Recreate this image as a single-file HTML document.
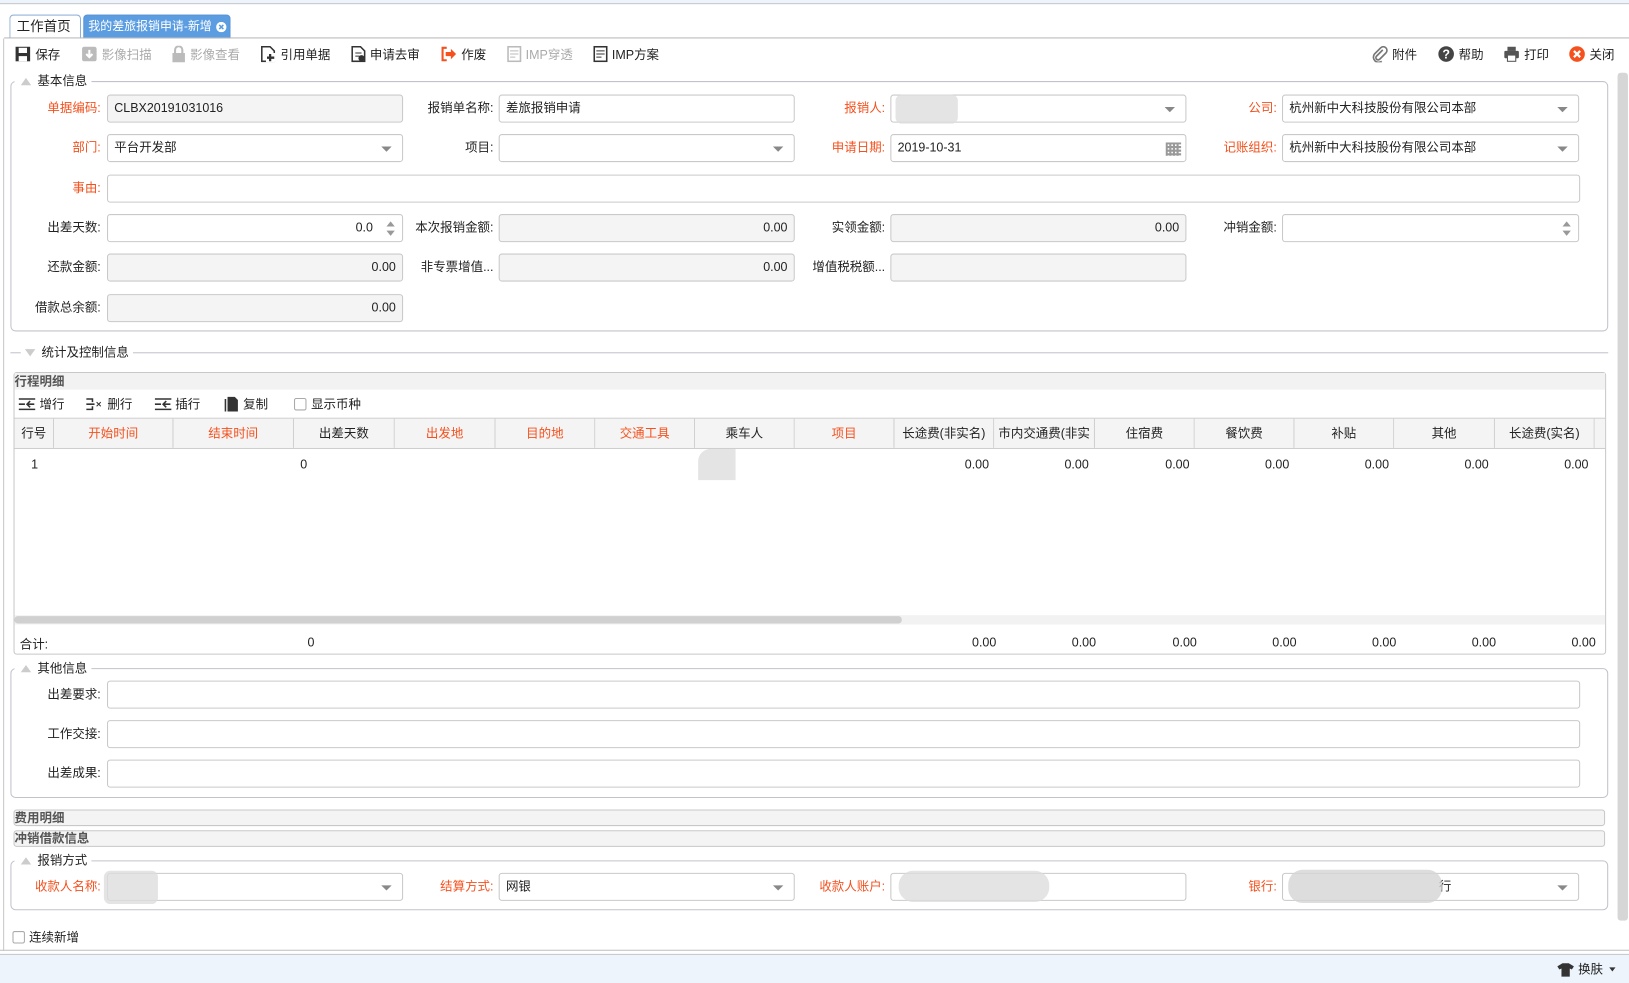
<!DOCTYPE html>
<html><head><meta charset="utf-8">
<style>
*{box-sizing:border-box;margin:0;padding:0}
html,body{width:1629px;height:983px;overflow:hidden;background:#fff}
#w{position:absolute;left:0;top:0;width:1568px;height:946px;transform:scale(1.0389,1.0391);transform-origin:0 0;font-family:"Liberation Sans","Noto Sans CJK SC",sans-serif;font-size:12px;color:#222}
.a{position:absolute}
.lb{position:absolute;text-align:right;width:95px;line-height:27px;white-space:nowrap;font-size:12px}
.r{color:#f4511e}
.in{position:absolute;height:27px;border:1px solid #c9c9c9;border-radius:3px;background:#fff;line-height:25px;padding:0 6px;font-size:12px;white-space:nowrap;overflow:hidden}
.ro{background:#f4f4f4}
.num{text-align:right}
.dd::after{content:"";position:absolute;right:10px;top:11px;border-left:5px solid transparent;border-right:5px solid transparent;border-top:5px solid #888}
.fs{position:absolute;border:1px solid #c2c2cc;border-radius:5px}
.lg{position:absolute;background:#fff;padding:0 4px 0 0;font-size:12px;line-height:14px}
.lg i{display:inline-block;width:0;height:0;border-left:5px solid transparent;border-right:5px solid transparent;border-bottom:7px solid #ccc;margin:0 6px 1px 6px;vertical-align:middle}
.tb{position:absolute;top:44px;font-size:12px;line-height:16px;white-space:nowrap}
.ic{display:inline-block;vertical-align:-3px;margin-right:4px}
.g{color:#aaa}
.th{position:absolute;top:403px;height:28px;line-height:28px;text-align:center;border-right:1px solid #d0d0d0;background:#f4f4f4;font-size:12px;white-space:nowrap;overflow:hidden}
.cell{position:absolute;font-size:12px;text-align:right}
.bar{position:absolute;left:13px;width:1532px;height:16px;border:1px solid #c8c8c8;border-radius:3px;background:#f4f4f4;font-weight:bold;color:#555;line-height:14px;font-size:12px;padding-left:0}
.blur{position:absolute;background:#ddd;border-radius:6px;opacity:.8}
</style></head><body><div id="w">
<div class="a" style="left:0;top:0;width:1568px;height:4px;background:#edf4fc;border-bottom:1px solid #c8c8c8"></div>
<div class="a" style="left:9px;top:14px;width:69px;height:23px;border:1px solid #8fb0d8;border-bottom:none;border-radius:4px 4px 0 0;background:#fff;line-height:22px;padding-left:6px;font-size:13px">工作首页</div>
<div class="a" style="left:80px;top:14px;width:142px;height:23px;border:1px solid #5a93d6;border-bottom:none;border-radius:4px 4px 0 0;background:#5b9de0;color:#fff;line-height:22px;padding-left:4px;font-size:11.5px;white-space:nowrap">我的差旅报销申请-新增<svg style="position:absolute;right:3px;top:6px" width="10" height="10"><circle cx="5" cy="5" r="5" fill="#fff"/><path d="M3 3l4 4M7 3l-4 4" stroke="#5b9de0" stroke-width="1.5"/></svg></div>
<div class="a" style="left:4px;top:36px;width:1564px;height:1px;background:#b8b8b8"></div>
<div class="a" style="left:3px;top:37px;width:1px;height:878px;background:#c8c8c8"></div>
<div class="tb" style="left:14px"><svg class="ic" width="16" height="16"><rect x="1" y="1" width="14" height="14" fill="#333"/><rect x="4" y="2" width="8" height="5" fill="#fff"/><rect x="4" y="10" width="8" height="5" fill="#fff"/></svg>保存</div>
<div class="tb g" style="left:78px"><svg class="ic" width="16" height="16"><rect x="1" y="1" width="14" height="14" rx="2" fill="#bbb"/><path d="M8 4v6M5 8l3 3 3-3" stroke="#fff" stroke-width="2" fill="none"/></svg>影像扫描</div>
<div class="tb g" style="left:165px"><svg class="ic" width="14" height="16"><rect x="1" y="7" width="12" height="9" fill="#bbb"/><path d="M3.5 7V4a3.5 3.5 0 0 1 7 0v3" stroke="#bbb" stroke-width="2" fill="none"/></svg>影像查看</div>
<div class="tb" style="left:250px"><svg class="ic" width="16" height="16"><path d="M2 1h8l4 4v10H2z" fill="none" stroke="#333" stroke-width="1.5"/><rect x="6" y="7" width="9" height="9" fill="#fff"/><path d="M10 8v7M7 11.5h7" stroke="#333" stroke-width="2.2"/></svg>引用单据</div>
<div class="tb" style="left:338px"><svg class="ic" width="14" height="16"><path d="M1 1h8l4 4v10H1z" fill="none" stroke="#333" stroke-width="1.5"/><path d="M4 7h6M4 10h4" stroke="#333"/><circle cx="10" cy="12" r="3" fill="#333"/></svg>申请去审</div>
<div class="tb" style="left:424px"><svg class="ic" width="16" height="16"><path d="M6 2H2v12h4" stroke="#f4511e" stroke-width="2" fill="none"/><path d="M5 6h5V3l5 5-5 5v-3H5z" fill="#f4511e"/></svg>作废</div>
<div class="tb g" style="left:488px"><svg class="ic" width="14" height="16"><rect x="1" y="1" width="12" height="14" fill="none" stroke="#bbb" stroke-width="1.5"/><path d="M3 5h8M3 8h8M3 11h5" stroke="#bbb"/></svg>IMP穿透</div>
<div class="tb" style="left:571px"><svg class="ic" width="14" height="16"><rect x="1" y="1" width="12" height="14" fill="none" stroke="#333" stroke-width="1.5"/><path d="M3 5h8M3 8h8M3 11h5" stroke="#333"/></svg>IMP方案</div>
<div class="tb" style="left:1320px"><svg class="ic" width="16" height="16"><path d="M11 4L5 10a2 2 0 0 0 3 3l6-6a3.5 3.5 0 0 0-5-5L3 8a5 5 0 0 0 7 7" stroke="#777" stroke-width="1.6" fill="none"/></svg>附件</div>
<div class="tb" style="left:1384px"><svg class="ic" width="16" height="16"><circle cx="8" cy="8" r="7.5" fill="#444"/><text x="8" y="12.5" font-size="12" font-weight="bold" fill="#fff" text-anchor="middle" font-family="Liberation Sans">?</text></svg>帮助</div>
<div class="tb" style="left:1447px"><svg class="ic" width="16" height="16"><rect x="4" y="1" width="8" height="4" fill="#555"/><rect x="1" y="5" width="14" height="7" rx="1" fill="#555"/><rect x="4" y="9" width="8" height="6" fill="#fff" stroke="#555"/></svg>打印</div>
<div class="tb" style="left:1510px"><svg class="ic" width="16" height="16"><circle cx="8" cy="8" r="7.5" fill="#f4511e"/><path d="M5 5l6 6M11 5l-6 6" stroke="#fff" stroke-width="2.2"/></svg>关闭</div>
<div class="a" style="left:1557px;top:70px;width:10px;height:816px;background:#d6d6d6;border-radius:3px"></div>

<div class="fs" style="left:10px;top:78px;width:1538px;height:241px"></div>
<div class="lg" style="left:14px;top:71px"><i></i>基本信息</div>
<div class="lb r" style="left:2px;top:91px">单据编码:</div><div class="in ro" style="left:103px;top:91px;width:285px">CLBX20191031016</div>
<div class="lb" style="left:380px;top:91px">报销单名称:</div><div class="in" style="left:480px;top:91px;width:285px">差旅报销申请</div>
<div class="lb r" style="left:757px;top:91px">报销人:</div><div class="in dd" style="left:857px;top:91px;width:285px"></div><div class="blur" style="left:862px;top:91px;width:60px;height:28px"></div>
<div class="lb r" style="left:1134px;top:91px">公司:</div><div class="in dd" style="left:1234px;top:91px;width:286px">杭州新中大科技股份有限公司本部</div>

<div class="lb r" style="left:2px;top:129px">部门:</div><div class="in dd" style="left:103px;top:129px;width:285px">平台开发部</div>
<div class="lb" style="left:380px;top:129px">项目:</div><div class="in dd" style="left:480px;top:129px;width:285px"></div>
<div class="lb r" style="left:757px;top:129px">申请日期:</div><div class="in" style="left:857px;top:129px;width:285px">2019-10-31<svg class="a" style="right:4px;top:7px" width="15" height="13"><path d="M0 1h15M0 4.5h15M0 8h15M0 11.5h15M1 0v13M4.5 0v13M8 0v13M11.5 0v13" stroke="#999" stroke-width="2"/></svg></div>
<div class="lb r" style="left:1134px;top:129px">记账组织:</div><div class="in dd" style="left:1234px;top:129px;width:286px">杭州新中大科技股份有限公司本部</div>

<div class="lb r" style="left:2px;top:168px">事由:</div><div class="in" style="left:103px;top:168px;width:1418px"></div>

<div class="lb" style="left:2px;top:206px">出差天数:</div><div class="in num" style="left:103px;top:206px;width:285px;padding-right:28px">0.0<span class="a" style="right:7px;top:6px;width:0;border-left:4px solid transparent;border-right:4px solid transparent;border-bottom:5px solid #999"></span><span class="a" style="right:7px;top:15px;width:0;border-left:4px solid transparent;border-right:4px solid transparent;border-top:5px solid #999"></span></div>
<div class="lb" style="left:380px;top:206px">本次报销金额:</div><div class="in ro num" style="left:480px;top:206px;width:285px">0.00</div>
<div class="lb" style="left:757px;top:206px">实领金额:</div><div class="in ro num" style="left:857px;top:206px;width:285px">0.00</div>
<div class="lb" style="left:1134px;top:206px">冲销金额:</div><div class="in" style="left:1234px;top:206px;width:286px"><span class="a" style="right:7px;top:6px;border-left:4px solid transparent;border-right:4px solid transparent;border-bottom:5px solid #999"></span><span class="a" style="right:7px;top:15px;border-left:4px solid transparent;border-right:4px solid transparent;border-top:5px solid #999"></span></div>

<div class="lb" style="left:2px;top:244px">还款金额:</div><div class="in ro num" style="left:103px;top:244px;width:285px">0.00</div>
<div class="lb" style="left:380px;top:244px">非专票增值...</div><div class="in ro num" style="left:480px;top:244px;width:285px">0.00</div>
<div class="lb" style="left:757px;top:244px">增值税税额...</div><div class="in ro" style="left:857px;top:244px;width:285px"></div>

<div class="lb" style="left:2px;top:283px">借款总余额:</div><div class="in ro num" style="left:103px;top:283px;width:285px">0.00</div>

<div class="a" style="left:10px;top:339px;width:1538px;height:1px;background:#c2c2cc"></div>
<div class="lg" style="left:20px;top:332px;padding-left:2px"><i style="border-bottom:none;border-top:7px solid #ccc;margin-left:2px"></i>统计及控制信息</div>

<div class="a" style="left:13px;top:358px;width:1533px;height:272px;border:1px solid #c8c8c8;border-radius:3px"></div>
<div class="a" style="left:14px;top:359px;width:1531px;height:16px;background:#f2f2f2;font-weight:bold;color:#555;line-height:16px">行程明细</div>
<div class="a" style="left:18px;top:381px;line-height:16px;white-space:nowrap">
<span style="margin-right:18px"><svg class="ic" width="16" height="14"><path d="M0 2h16M0 12h16M0 7h6M15 7H8M11 4L8 7l3 3" stroke="#333" stroke-width="1.5" fill="none"/></svg>增行</span>
<span style="margin-right:18px"><svg class="ic" width="16" height="14"><path d="M0 2h6v3M0 12h6V9M0 7h8" stroke="#333" stroke-width="1.5" fill="none"/><path d="M10 5l4 4M14 5l-4 4" stroke="#333"/></svg>删行</span>
<span style="margin-right:20px"><svg class="ic" width="16" height="14"><path d="M0 2h16M0 12h16M0 7h6M15 7H8M11 4L8 7l3 3" stroke="#333" stroke-width="1.5" fill="none"/></svg>插行</span>
<span style="margin-right:22px"><svg class="ic" width="14" height="15"><path d="M3 1h7l3 3v11H3z" fill="#333"/><path d="M1 3v12" stroke="#333" stroke-width="1.5"/></svg>复制</span>
<span><span style="display:inline-block;width:12px;height:12px;border:1px solid #aaa;border-radius:2px;vertical-align:-2px;margin-right:4px"></span>显示币种</span></div>
<div class="a" style="left:13px;top:402px;width:1532px;height:1px;background:#c8c8c8"></div>
<div class="a" style="left:13px;top:431px;width:1532px;height:1px;background:#c8c8c8"></div>
<div class="th" style="left:14px;width:38px">行号</div>
<div class="th r" style="left:52px;width:115px">开始时间</div>
<div class="th r" style="left:167px;width:116px">结束时间</div>
<div class="th" style="left:283px;width:97px">出差天数</div>
<div class="th r" style="left:380px;width:97px">出发地</div>
<div class="th r" style="left:477px;width:96px">目的地</div>
<div class="th r" style="left:573px;width:96px">交通工具</div>
<div class="th" style="left:669px;width:96px">乘车人</div>
<div class="th r" style="left:765px;width:96px">项目</div>
<div class="th" style="left:861px;width:96px">长途费(非实名)</div>
<div class="th" style="left:957px;width:97px">市内交通费(非实</div>
<div class="th" style="left:1054px;width:96px">住宿费</div>
<div class="th" style="left:1150px;width:96px">餐饮费</div>
<div class="th" style="left:1246px;width:96px">补贴</div>
<div class="th" style="left:1342px;width:97px">其他</div>
<div class="th" style="left:1439px;width:96px">长途费(实名)</div>
<div class="th" style="left:1535px;width:10px;border-right:none"></div>
<div class="cell" style="left:30px;top:440px">1</div>
<div class="cell" style="left:289px;top:440px">0</div>
<div class="blur" style="left:672px;top:432px;width:36px;height:30px;border-radius:12px 0 0 0"></div>
<div class="cell" style="left:880px;top:440px;width:72px">0.00</div>
<div class="cell" style="left:976px;top:440px;width:72px">0.00</div>
<div class="cell" style="left:1073px;top:440px;width:72px">0.00</div>
<div class="cell" style="left:1169px;top:440px;width:72px">0.00</div>
<div class="cell" style="left:1265px;top:440px;width:72px">0.00</div>
<div class="cell" style="left:1361px;top:440px;width:72px">0.00</div>
<div class="cell" style="left:1457px;top:440px;width:72px">0.00</div>
<div class="a" style="left:14px;top:592px;width:1531px;height:9px;background:#f2f2f2"></div>
<div class="a" style="left:14px;top:593px;width:854px;height:7px;background:#d0d0d0;border-radius:3px"></div>
<div class="cell" style="left:19px;top:611px">合计:</div>
<div class="cell" style="left:296px;top:611px">0</div>
<div class="cell" style="left:887px;top:611px;width:72px">0.00</div>
<div class="cell" style="left:983px;top:611px;width:72px">0.00</div>
<div class="cell" style="left:1080px;top:611px;width:72px">0.00</div>
<div class="cell" style="left:1176px;top:611px;width:72px">0.00</div>
<div class="cell" style="left:1272px;top:611px;width:72px">0.00</div>
<div class="cell" style="left:1368px;top:611px;width:72px">0.00</div>
<div class="cell" style="left:1464px;top:611px;width:72px">0.00</div>

<div class="fs" style="left:10px;top:643px;width:1538px;height:125px"></div>
<div class="lg" style="left:14px;top:636px"><i></i>其他信息</div>
<div class="lb" style="left:2px;top:655px">出差要求:</div><div class="in" style="left:103px;top:655px;width:1418px"></div>
<div class="lb" style="left:2px;top:693px">工作交接:</div><div class="in" style="left:103px;top:693px;width:1418px"></div>
<div class="lb" style="left:2px;top:731px">出差成果:</div><div class="in" style="left:103px;top:731px;width:1418px"></div>

<div class="bar" style="top:779px">费用明细</div>
<div class="bar" style="top:799px">冲销借款信息</div>

<div class="fs" style="left:10px;top:828px;width:1538px;height:48px"></div>
<div class="lg" style="left:14px;top:821px"><i></i>报销方式</div>
<div class="lb r" style="left:2px;top:840px">收款人名称:</div><div class="in dd" style="left:103px;top:840px;width:285px"></div><div class="blur" style="left:100px;top:838px;width:52px;height:32px"></div>
<div class="lb r" style="left:380px;top:840px">结算方式:</div><div class="in dd" style="left:480px;top:840px;width:285px">网银</div>
<div class="lb r" style="left:757px;top:840px">收款人账户:</div><div class="in" style="left:857px;top:840px;width:285px"></div><div class="blur" style="left:865px;top:838px;width:145px;height:30px;border-radius:14px"></div>
<div class="lb r" style="left:1134px;top:840px">银行:</div><div class="in dd" style="left:1234px;top:840px;width:286px;padding-left:150px">行</div><div class="blur" style="left:1240px;top:837px;width:148px;height:32px;border-radius:14px;background:#d4d4d4"></div>

<div class="a" style="left:12px;top:895px;line-height:14px"><span style="display:inline-block;width:12px;height:12px;border:1px solid #aaa;border-radius:2px;vertical-align:-2px;margin-right:4px"></span>连续新增</div>

<div class="a" style="left:0;top:914px;width:1568px;height:1px;background:#c0c0c0"></div>
<div class="a" style="left:0;top:918px;width:1568px;height:28px;background:#edf4fc;border-top:1px solid #c8c8c8"></div>
<div class="a" style="left:1499px;top:925px;line-height:16px;white-space:nowrap"><svg class="ic" width="16" height="14"><path d="M5 1h6l5 3-2 3-2-1v8H4V6L2 7 0 4z" fill="#333"/></svg>换肤 <span style="display:inline-block;border-left:3px solid transparent;border-right:3px solid transparent;border-top:4px solid #333;vertical-align:2px;margin-left:3px"></span></div>
</div></body></html>
